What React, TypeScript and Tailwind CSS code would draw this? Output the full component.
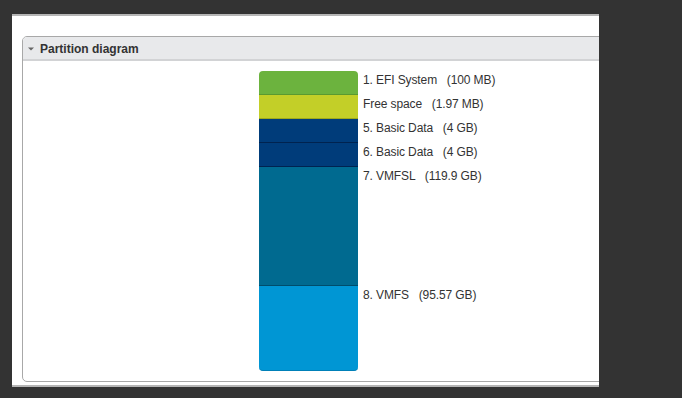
import React from "react";

const segs = [
  { label: "1. EFI System", size: "(100 MB)", h: 24, bg: "bg-[#6cb33e]", line: "border-b-[#5a9a30]" },
  { label: "Free space", size: "(1.97 MB)", h: 24, bg: "bg-[#c3cf28]", line: "border-b-[#9fa91c]" },
  { label: "5. Basic Data", size: "(4 GB)", h: 24, bg: "bg-[#003c7a]", line: "border-b-[#002350]" },
  { label: "6. Basic Data", size: "(4 GB)", h: 24, bg: "bg-[#003c7a]", line: "border-b-[#002350]" },
  { label: "7. VMFSL", size: "(119.9 GB)", h: 119, bg: "bg-[#006a90]", line: "border-b-[#004d6c]" },
  { label: "8. VMFS", size: "(95.57 GB)", h: 85, bg: "bg-[#0096d4]", line: "border-b-[#0080b8]" },
];

export default function App() {
  return (
    <div className="w-[682px] h-[398px] bg-[#333333] pt-[14px] pl-[12px] overflow-hidden" style={{ fontFamily: '"Liberation Sans", Arial, sans-serif' }}>
      <div className="w-[587px] h-[373px] bg-white border-t-2 border-b-2 border-[#b5b5b5] overflow-hidden pl-[10px] pt-[20px]">
        <div className="w-[620px] h-[346px] border border-[#a8a8a8] rounded-[5px] flex flex-col overflow-hidden">
          <div className="h-[24px] bg-[#e8e9eb] border-b-2 border-[#d2d3d5] flex items-center pl-[4px] pt-[2px] shrink-0">
            <svg width="8" height="6" viewBox="0 0 8 6" className="mr-[5px]">
              <polygon points="1,1.5 7,1.5 4,4.5" fill="#666" />
            </svg>
            <span className="text-[12px] font-bold text-[#333]">Partition diagram</span>
          </div>
          <div className="flex pl-[236px] pt-[10px]">
            <div className="flex flex-col">
              {segs.map((s, i) => (
                <div key={i} className="flex items-start">
                  <div
                    className={`w-[99px] border-b ${s.bg} ${s.line} ${i === 0 ? "rounded-t-[4px]" : ""} ${i === segs.length - 1 ? "rounded-b-[4px]" : ""}`}
                    style={{ height: s.h }}
                  />
                  <div className="pl-[5px] pt-[2px] text-[12px] leading-[15px] text-[#333] whitespace-pre tracking-[-0.1px]">
                    {s.label}{"   "}{s.size}
                  </div>
                </div>
              ))}
            </div>
          </div>
        </div>
      </div>
    </div>
  );
}
